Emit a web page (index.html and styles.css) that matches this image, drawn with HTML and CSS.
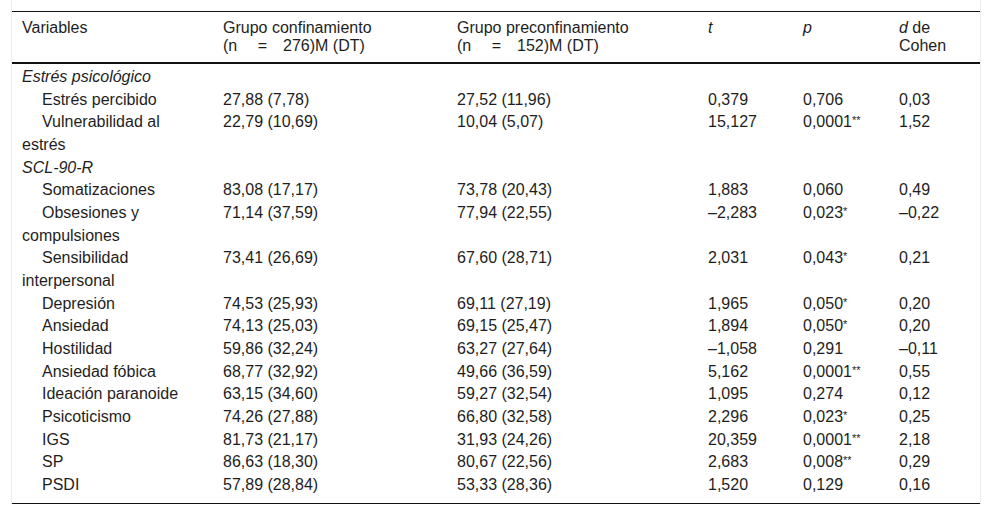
FILE: index.html
```html
<!DOCTYPE html>
<html lang="es">
<head>
<meta charset="utf-8">
<title>Tabla</title>
<link rel="stylesheet" href="styles.css">
</head>
<body>
<div class="wrap">
<table class="tbl">
<colgroup>
<col class="c1"><col class="c2"><col class="c3"><col class="c4"><col class="c5"><col class="c6">
</colgroup>
<thead>
<tr>
<th>Variables</th>
<th>Grupo confinamiento<br>(n &emsp;=&emsp;276)M (DT)</th>
<th>Grupo preconfinamiento<br>(n &emsp;=&emsp;152)M (DT)</th>
<th><i>t</i></th>
<th><i>p</i></th>
<th><i>d</i> de Cohen</th>
</tr>
</thead>
<tbody>
<tr class="first"><td class="grp" colspan="6"><i>Estrés psicológico</i></td></tr>
<tr><td class="sub">Estrés percibido</td><td>27,88 (7,78)</td><td>27,52 (11,96)</td><td>0,379</td><td>0,706</td><td>0,03</td></tr>
<tr><td class="sub">Vulnerabilidad al estrés</td><td>22,79 (10,69)</td><td>10,04 (5,07)</td><td>15,127</td><td>0,0001<span class="ast">**</span></td><td>1,52</td></tr>
<tr><td class="grp" colspan="6"><i>SCL-90-R</i></td></tr>
<tr><td class="sub">Somatizaciones</td><td>83,08 (17,17)</td><td>73,78 (20,43)</td><td>1,883</td><td>0,060</td><td>0,49</td></tr>
<tr><td class="sub">Obsesiones y compulsiones</td><td>71,14 (37,59)</td><td>77,94 (22,55)</td><td>–2,283</td><td>0,023<span class="ast">*</span></td><td>–0,22</td></tr>
<tr><td class="sub">Sensibilidad interpersonal</td><td>73,41 (26,69)</td><td>67,60 (28,71)</td><td>2,031</td><td>0,043<span class="ast">*</span></td><td>0,21</td></tr>
<tr><td class="sub">Depresión</td><td>74,53 (25,93)</td><td>69,11 (27,19)</td><td>1,965</td><td>0,050<span class="ast">*</span></td><td>0,20</td></tr>
<tr><td class="sub">Ansiedad</td><td>74,13 (25,03)</td><td>69,15 (25,47)</td><td>1,894</td><td>0,050<span class="ast">*</span></td><td>0,20</td></tr>
<tr><td class="sub">Hostilidad</td><td>59,86 (32,24)</td><td>63,27 (27,64)</td><td>–1,058</td><td>0,291</td><td>–0,11</td></tr>
<tr><td class="sub">Ansiedad fóbica</td><td>68,77 (32,92)</td><td>49,66 (36,59)</td><td>5,162</td><td>0,0001<span class="ast">**</span></td><td>0,55</td></tr>
<tr><td class="sub">Ideación paranoide</td><td>63,15 (34,60)</td><td>59,27 (32,54)</td><td>1,095</td><td>0,274</td><td>0,12</td></tr>
<tr><td class="sub">Psicoticismo</td><td>74,26 (27,88)</td><td>66,80 (32,58)</td><td>2,296</td><td>0,023<span class="ast">*</span></td><td>0,25</td></tr>
<tr><td class="sub">IGS</td><td>81,73 (21,17)</td><td>31,93 (24,26)</td><td>20,359</td><td>0,0001<span class="ast">**</span></td><td>2,18</td></tr>
<tr><td class="sub">SP</td><td>86,63 (18,30)</td><td>80,67 (22,56)</td><td>2,683</td><td>0,008<span class="ast">**</span></td><td>0,29</td></tr>
<tr class="last"><td class="sub">PSDI</td><td>57,89 (28,84)</td><td>53,33 (28,36)</td><td>1,520</td><td>0,129</td><td>0,16</td></tr>
</tbody>
</table>
</div>
</body>
</html>
```

FILE: styles.css
```css
html, body {
  margin: 0;
  padding: 0;
  background: #fff;
}
body {
  font-family: "Liberation Sans", Arial, sans-serif;
  font-size: 16px;
  color: #1e1e1e;
}
.wrap {
  margin: 0 11px;
  padding-top: 11px;
  border-left: 1px solid #ececec;
  border-right: 1px solid #ececec;
}
.tbl {
  width: 100%;
  border-collapse: collapse;
  table-layout: fixed;
  border-bottom: 1px solid #111;
}
.c1 { width: 201px; }
.c2 { width: 234px; }
.c3 { width: 251px; }
.c4 { width: 95px; }
.c5 { width: 96px; }
.c6 { width: 91px; }
.tbl thead tr {
  border-top: 1px solid #111;
  border-bottom: 2px solid #111;
}
.tbl th {
  font-weight: normal;
  text-align: left;
  vertical-align: top;
  line-height: normal;
  padding: 7px 10px 7px 10px;
}
.tbl td {
  text-align: left;
  vertical-align: top;
  line-height: 22.67px;
  padding: 0 10px;
}
.tbl tr.first td {
  padding-top: 2px;
}
.tbl tr.last td {
  padding-bottom: 6px;
}
.tbl td.sub {
  text-indent: 20px;
}
.ast {
  font-size: 11px;
  vertical-align: 3px;
  line-height: 0;
}
```
